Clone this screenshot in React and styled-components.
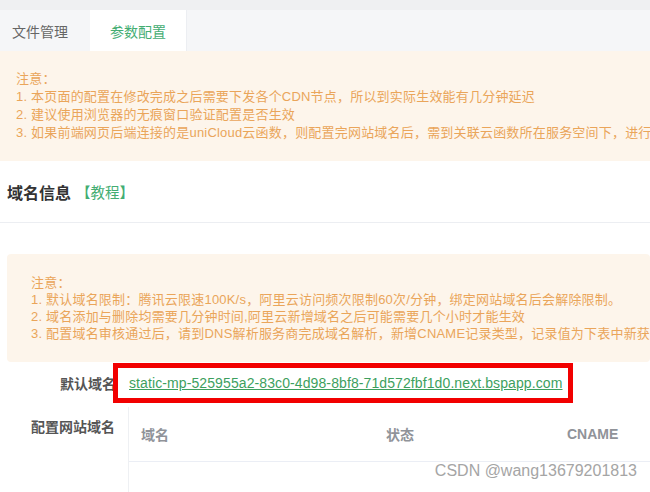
import styled, { createGlobalStyle } from "styled-components";

const GlobalStyle = createGlobalStyle`
  body {
    margin: 0;
    background: #fff;
    font-family: "Liberation Sans", "Noto Sans CJK SC", sans-serif;
  }
`;

const Page = styled.div`
  position: relative;
  width: 650px;
  height: 492px;
  overflow: hidden;
  white-space: nowrap;
  background: #fff;
`;

const TopStrip = styled.div`
  height: 10px;
  background: #eff0f2;
`;

const TabBar = styled.div`
  display: flex;
  height: 41px;
  background: #f5f6f8;
`;

const Tab = styled.div`
  display: flex;
  align-items: center;
  padding: ${({ $first }) => ($first ? "0 22px 0 12px" : "0 20px")};
  font-size: 14px;
  color: ${({ $active }) => ($active ? "#43ad72" : "#666")};
  background: ${({ $active }) => ($active ? "#fff" : "transparent")};
  border-right: ${({ $active }) => ($active ? "1px solid #eceef2" : "none")};
`;

const Notice = styled.div`
  background: #fdf5eb;
  color: #eaa55a;
  font-size: 13px;
  letter-spacing: 0.2px;
  line-height: ${({ $tight }) => ($tight ? "17px" : "18px")};
  padding: ${({ $tight }) => ($tight ? "20px 24px 20px" : "19px 16px")};
  margin: ${({ $tight }) => ($tight ? "31px 0 1px 7px" : "0")};
  border-radius: ${({ $tight }) => ($tight ? "4px" : "0")};
`;

const SectionHeader = styled.div`
  display: flex;
  align-items: center;
  height: 61px;
  padding-left: 7px;
  border-bottom: 1px solid #eceef2;
`;

const SectionTitle = styled.span`
  font-size: 16px;
  font-weight: bold;
  color: #333;
`;

const TutorialLink = styled.span`
  font-size: 14.5px;
  color: #43ad72;
  margin-left: 5px;
`;

const Row = styled.div`
  display: flex;
  align-items: ${({ $top }) => ($top ? "flex-start" : "center")};
`;

const Label = styled.div`
  width: ${({ $w }) => $w}px;
  flex-shrink: 0;
  text-align: right;
  font-size: 14px;
  font-weight: bold;
  color: #555;
  padding-top: ${({ $pt }) => $pt || 0}px;
`;

const Highlight = styled.div`
  position: relative;
  z-index: 1;
  width: 460px;
  height: 40px;
  box-sizing: border-box;
  margin-left: -3px;
  border: 5px solid #f20000;
  padding-left: 11px;
  display: flex;
  align-items: center;
`;

const DomainLink = styled.a`
  font-family: "Liberation Sans", Arial, sans-serif;
  font-size: 14px;
  letter-spacing: 0.1px;
  color: #3d9f5e;
  text-decoration: underline;
`;

const Table = styled.div`
  margin-left: 13px;
  margin-top: 4px;
  flex: 1;
  border-left: 1px solid #eef0f3;
  height: 90px;
`;

const HeadRow = styled.div`
  display: grid;
  grid-template-columns: 245px 181px auto;
  height: 54px;
  align-items: center;
  border-bottom: 1px solid #ebeef5;
`;

const HeadCell = styled.div`
  padding-left: 12px;
  font-size: 14px;
  font-weight: bold;
  color: #909399;
`;

const Watermark = styled.div`
  position: absolute;
  right: 13px;
  top: 462px;
  font-family: "Liberation Sans", Arial, sans-serif;
  font-size: 16px;
  color: #a5a5a5;
`;

export default function App() {
  return (
    <Page>
      <GlobalStyle />
      <TopStrip />
      <TabBar>
        <Tab $first>文件管理</Tab>
        <Tab $active>参数配置</Tab>
      </TabBar>
      <Notice>
        <div>注意：</div>
        <div>1. 本页面的配置在修改完成之后需要下发各个CDN节点，所以到实际生效能有几分钟延迟</div>
        <div>2. 建议使用浏览器的无痕窗口验证配置是否生效</div>
        <div>3. 如果前端网页后端连接的是uniCloud云函数，则配置完网站域名后，需到关联云函数所在服务空间下，进行</div>
      </Notice>
      <SectionHeader>
        <SectionTitle>域名信息</SectionTitle>
        <TutorialLink>【教程】</TutorialLink>
      </SectionHeader>
      <Notice $tight>
        <div>注意：</div>
        <div>1. 默认域名限制：腾讯云限速100K/s，阿里云访问频次限制60次/分钟，绑定网站域名后会解除限制。</div>
        <div>2. 域名添加与删除均需要几分钟时间,阿里云新增域名之后可能需要几个小时才能生效</div>
        <div>3. 配置域名审核通过后，请到DNS解析服务商完成域名解析，新增CNAME记录类型，记录值为下表中新获</div>
      </Notice>
      <Row>
        <Label $w={116}>默认域名</Label>
        <Highlight>
          <DomainLink href="#">static-mp-525955a2-83c0-4d98-8bf8-71d572fbf1d0.next.bspapp.com</DomainLink>
        </Highlight>
      </Row>
      <Row $top>
        <Label $w={115} $pt={13}>配置网站域名</Label>
        <Table>
          <HeadRow>
            <HeadCell>域名</HeadCell>
            <HeadCell>状态</HeadCell>
            <HeadCell>CNAME</HeadCell>
          </HeadRow>
        </Table>
      </Row>
      <Watermark>CSDN @wang13679201813</Watermark>
    </Page>
  );
}
